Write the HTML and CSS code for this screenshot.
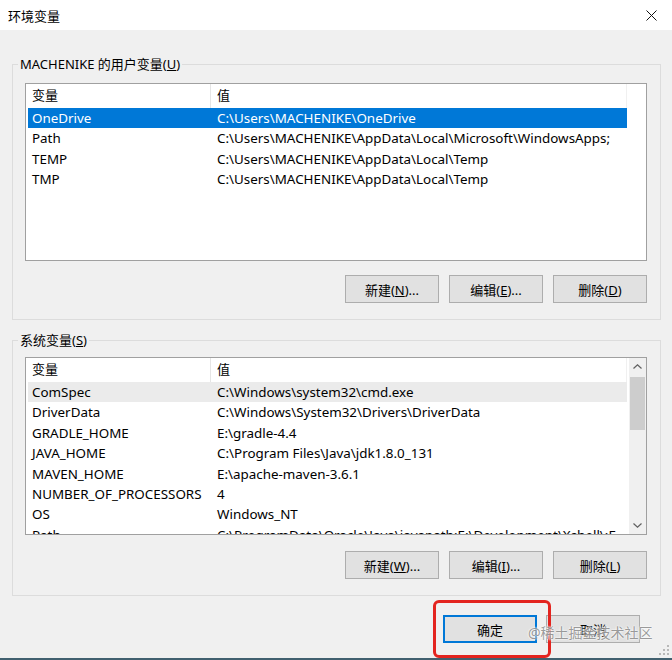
FILE: index.html
```html
<!DOCTYPE html>
<html lang="zh-CN">
<head>
<meta charset="utf-8">
<title>环境变量</title>
<link rel="stylesheet" href="styles.css">
</head>
<body>
<div class="window">
  <div class="titlebar">
    <span class="title">环境变量</span>
    <svg class="close" width="11" height="11" viewBox="0 0 11 11"><path d="M0.5 0.5 L10.5 10.5 M10.5 0.5 L0.5 10.5" stroke="#111" stroke-width="1" fill="none"/></svg>
  </div>
  <div class="body">
    <fieldset class="group">
      <legend>MACHENIKE 的用户变量(<u>U</u>)</legend>
      <div class="list">
        <div class="rows">
          <div class="head"><div class="c1">变量</div><div class="c2">值</div></div>
          <div class="row selected"><div class="c1">OneDrive</div><div class="c2">C:\Users\MACHENIKE\OneDrive</div></div>
          <div class="row"><div class="c1">Path</div><div class="c2">C:\Users\MACHENIKE\AppData\Local\Microsoft\WindowsApps;</div></div>
          <div class="row"><div class="c1">TEMP</div><div class="c2">C:\Users\MACHENIKE\AppData\Local\Temp</div></div>
          <div class="row"><div class="c1">TMP</div><div class="c2">C:\Users\MACHENIKE\AppData\Local\Temp</div></div>
        </div>
      </div>
      <div class="buttons">
        <button class="btn">新建(<u>N</u>)...</button>
        <button class="btn">编辑(<u>E</u>)...</button>
        <button class="btn">删除(<u>D</u>)</button>
      </div>
    </fieldset>

    <fieldset class="group group-sys">
      <legend>系统变量(<u>S</u>)</legend>
      <div class="list">
        <div class="rows">
          <div class="head"><div class="c1">变量</div><div class="c2">值</div></div>
          <div class="row hover"><div class="c1">ComSpec</div><div class="c2">C:\Windows\system32\cmd.exe</div></div>
          <div class="row"><div class="c1">DriverData</div><div class="c2">C:\Windows\System32\Drivers\DriverData</div></div>
          <div class="row"><div class="c1">GRADLE_HOME</div><div class="c2">E:\gradle-4.4</div></div>
          <div class="row"><div class="c1">JAVA_HOME</div><div class="c2">C:\Program Files\Java\jdk1.8.0_131</div></div>
          <div class="row"><div class="c1">MAVEN_HOME</div><div class="c2">E:\apache-maven-3.6.1</div></div>
          <div class="row"><div class="c1">NUMBER_OF_PROCESSORS</div><div class="c2">4</div></div>
          <div class="row"><div class="c1">OS</div><div class="c2">Windows_NT</div></div>
          <div class="row"><div class="c1">Path</div><div class="c2">C:\ProgramData\Oracle\Java\javapath;E:\Development\Xshell\;E</div></div>
        </div>
        <div class="scrollbar">
          <div class="arrow"><svg width="9" height="5" viewBox="0 0 9 5"><path d="M0.5 4.5 L4.5 0.8 L8.5 4.5" stroke="#606060" stroke-width="1.2" fill="none"/></svg></div>
          <div class="track"><div class="thumb"></div></div>
          <div class="arrow"><svg width="9" height="5" viewBox="0 0 9 5"><path d="M0.5 0.5 L4.5 4.2 L8.5 0.5" stroke="#606060" stroke-width="1.2" fill="none"/></svg></div>
        </div>
      </div>
      <div class="buttons">
        <button class="btn">新建(<u>W</u>)...</button>
        <button class="btn">编辑(<u>I</u>)...</button>
        <button class="btn">删除(<u>L</u>)</button>
      </div>
    </fieldset>

    <div class="dialog-buttons">
      <button class="btn default">确定</button>
      <button class="btn">取消</button>
    </div>
  </div>

  <div class="highlight-box"></div>
  <div class="watermark">@稀土掘金技术社区</div>
  <svg class="grip" width="10" height="10" viewBox="0 0 10 10">
    <rect x="8" y="0" width="2" height="2" fill="#b8b8b8"/>
    <rect x="4" y="4" width="2" height="2" fill="#b8b8b8"/>
    <rect x="8" y="4" width="2" height="2" fill="#b8b8b8"/>
    <rect x="0" y="8" width="2" height="2" fill="#b8b8b8"/>
    <rect x="4" y="8" width="2" height="2" fill="#b8b8b8"/>
    <rect x="8" y="8" width="2" height="2" fill="#b8b8b8"/>
  </svg>
</div>
</body>
</html>
```

FILE: styles.css
```css
* { box-sizing: border-box; }

body {
  margin: 0;
  background: #f0f0f0;
  font-family: "Noto Sans", "Noto Sans CJK SC", sans-serif;
  font-size: 13px;
  color: #000;
}

.window {
  position: relative;
  width: 672px;
  height: 660px;
  display: flex;
  flex-direction: column;
  overflow: hidden;
}

.titlebar {
  flex: none;
  height: 30px;
  background: #fff;
  display: flex;
  align-items: center;
  justify-content: space-between;
  padding: 0 15px 0 8px;
}

.title {
  font-size: 13px;
}

.close { display: block; }

.body {
  flex: 1;
  padding: 25px 11px 0 12px;
  border-bottom: 2px solid #41606f;
}

.group {
  margin: 0;
  min-width: 0;
  border: 1px solid #dcdcdc;
  padding: 10px 13px 15px 12px;
}

.group legend {
  font-size: 13px;
  line-height: 18px;
  padding: 0 2px;
  margin-left: -7px;
}

.group-sys {
  margin-top: 11px;
}

.group-sys legend { margin-bottom: -1px; }

.list {
  display: flex;
  height: 178px;
  background: #fff;
  border: 1px solid #a0a0a0;
  overflow: hidden;
  font-size: 13.4px;
}

.rows {
  flex: 1;
  padding-left: 2px;
  overflow: hidden;
}

.head,
.row {
  display: flex;
  width: 599px;
  white-space: nowrap;
}

.head {
  height: 24px;
  line-height: 23px;
  font-size: 13px;
}

.head .c1 { border-right: 1px solid #e5e5e5; }
.head .c2 { border-right: 1px solid #f0f0f0; }

.row {
  height: 20.4px;
  line-height: 20px;
}

.c1 {
  flex: none;
  width: 183px;
  padding-left: 4px;
  overflow: hidden;
}

.c2 {
  flex: none;
  width: 416px;
  padding-left: 6px;
  overflow: hidden;
}

.row.selected {
  background: #0078d7;
  color: #fff;
}

.row.hover {
  background: #ebebeb;
}

.scrollbar {
  flex: none;
  width: 17px;
  background: #f0f0f0;
  display: flex;
  flex-direction: column;
}

.arrow {
  height: 17px;
  display: flex;
  align-items: center;
  justify-content: center;
}

.arrow svg { display: block; }

.track {
  flex: 1;
  padding: 2px 1px 0 1px;
}

.thumb {
  height: 53px;
  background: #cdcdcd;
}

.buttons {
  display: flex;
  justify-content: flex-end;
  gap: 10px;
  margin-top: 14px;
}

.btn {
  width: 94px;
  height: 28px;
  padding: 0;
  background: #e1e1e1;
  border: 1px solid #adadad;
  font-family: "Noto Sans", "Noto Sans CJK SC", sans-serif;
  font-size: 13px;
  color: #000;
}

.btn.default {
  border: 2px solid #0078d7;
}

.group { padding-bottom: 16px; }
.group-sys .buttons { margin-top: 16px; }
.group-sys { padding-bottom: 16px; padding-top: 9px; }

.dialog-buttons {
  display: flex;
  justify-content: flex-end;
  gap: 9px;
  margin-top: 19px;
  padding-right: 21px;
}

.highlight-box {
  position: absolute;
  left: 433px;
  top: 600px;
  width: 118px;
  height: 58px;
  border: 3px solid #e3241f;
  border-radius: 6px;
}

.watermark {
  position: absolute;
  left: 528px;
  top: 623px;
  font-size: 14px;
  line-height: 20px;
  color: rgba(110, 110, 110, 0.7);
  text-shadow: 0 0 2px #fff, 0 0 2px #fff;
  white-space: nowrap;
}

.grip {
  position: absolute;
  right: 3px;
  bottom: 5px;
}
```
